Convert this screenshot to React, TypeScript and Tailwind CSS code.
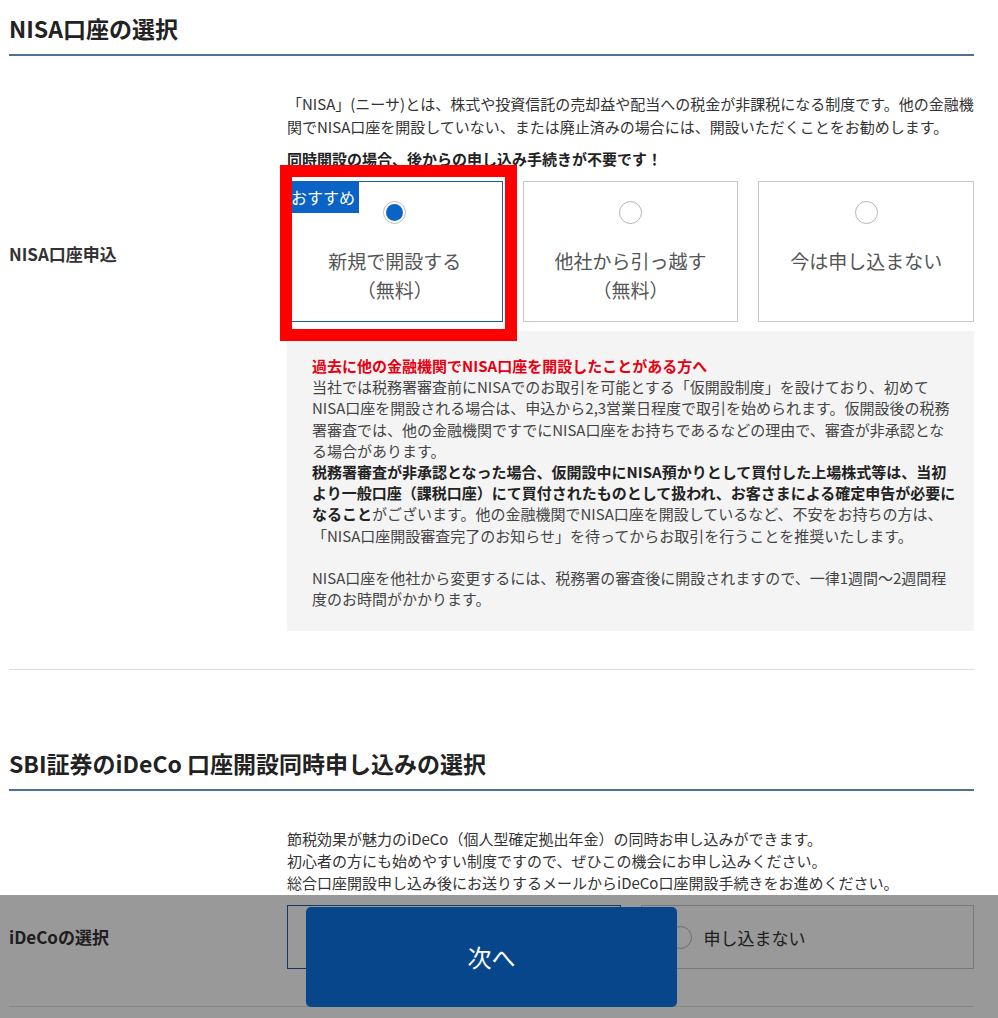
const FONT = "font-['Noto_Sans_CJK_JP','Noto_Sans',sans-serif]";

function Radio({ checked = false }: { checked?: boolean }) {
  if (checked) {
    return (
      <span className="flex h-[23px] w-[23px] shrink-0 items-center justify-center rounded-full border border-[#bdbdbd] bg-white">
        <span className="h-[17px] w-[17px] rounded-full bg-[#0b63c6]" />
      </span>
    );
  }
  return (
    <span className="block h-[23px] w-[23px] shrink-0 rounded-full border border-[#b5b5b5] bg-white" />
  );
}

type NisaOption = {
  label: string;
  note?: string;
  checked?: boolean;
  recommended?: boolean;
};

const NISA_OPTIONS: NisaOption[] = [
  { label: "新規で開設する", note: "（無料）", checked: true, recommended: true },
  { label: "他社から引っ越す", note: "（無料）" },
  { label: "今は申し込まない" },
];

function NisaCard({ option }: { option: NisaOption }) {
  return (
    <div
      className={`relative flex h-[141px] flex-col items-center bg-white pt-[19px] ${
        option.checked ? "border border-[#1a5ea8]" : "border border-[#c8c8c8]"
      }`}
    >
      {option.recommended && (
        <span className="absolute -left-px -top-px h-[32px] bg-[#0b63c6] px-[4px] text-[16px] leading-[32px] text-white">
          おすすめ
        </span>
      )}
      <Radio checked={option.checked} />
      <p className="mt-[22px] text-center text-[19px] leading-[29px] text-[#555]">
        {option.label}
        {option.note && (
          <>
            <br />
            {option.note}
          </>
        )}
      </p>
    </div>
  );
}

function SectionTitle({ children }: { children: React.ReactNode }) {
  return (
    <h2 className="border-b-2 border-[#4f6f94] pb-[10px] text-[23px] font-bold leading-[32px] text-[#222]">
      {children}
    </h2>
  );
}

export default function App() {
  return (
    <div className={`${FONT} min-h-screen bg-white pb-[40px] pl-[9px] pr-[24px] text-[#333]`}>
      {/* NISA */}
      <section className="pt-[12px]">
        <SectionTitle>NISA口座の選択</SectionTitle>

        <div className="grid grid-cols-[278px_1fr] border-b border-[#dedede] pb-[38px] pt-[36px]">
          <div>
            <p className="mt-[151px] text-[17px] font-bold leading-[22px] text-[#333]">NISA口座申込</p>
          </div>

          <div>
            <p className="whitespace-nowrap text-[15px] leading-[23px] text-[#333]">
              「NISA」(ニーサ)とは、株式や投資信託の売却益や配当への税金が非課税になる制度です。他の金融機
              <br />
              関でNISA口座を開設していない、または廃止済みの場合には、開設いただくことをお勧めします。
            </p>
            <p className="mt-[9px] text-[15px] font-bold leading-[23px] text-[#222]">
              同時開設の場合、後からの申し込み手続きが不要です！
            </p>

            <div className="relative mt-[11px] grid grid-cols-3 gap-[20px]">
              {NISA_OPTIONS.map((option) => (
                <NisaCard key={option.label} option={option} />
              ))}
              <div className="pointer-events-none absolute left-[-7px] top-[-16px] z-10 h-[176px] w-[237px] border-[12px] border-[#ff0000]" />
            </div>

            <div className="mt-[9px] whitespace-nowrap bg-[#f4f4f4] pb-[22px] pl-[25px] pt-[24px] text-[15px] leading-[21.2px] text-[#444]">
              <p className="font-bold text-[#e60012]">過去に他の金融機関でNISA口座を開設したことがある方へ</p>
              <p>当社では税務署審査前にNISAでのお取引を可能とする「仮開設制度」を設けており、初めて</p>
              <p>NISA口座を開設される場合は、申込から2,3営業日程度で取引を始められます。仮開設後の税務</p>
              <p>署審査では、他の金融機関ですでにNISA口座をお持ちであるなどの理由で、審査が非承認とな</p>
              <p>る場合があります。</p>
              <p className="font-bold text-[#222]">
                税務署審査が非承認となった場合、仮開設中にNISA預かりとして買付した上場株式等は、当初
              </p>
              <p className="font-bold text-[#222]">
                より一般口座（課税口座）にて買付されたものとして扱われ、お客さまによる確定申告が必要に
              </p>
              <p>
                <span className="font-bold text-[#222]">なること</span>
                がございます。他の金融機関でNISA口座を開設しているなど、不安をお持ちの方は、
              </p>
              <p>「NISA口座開設審査完了のお知らせ」を待ってからお取引を行うことを推奨いたします。</p>
              <p className="h-[21.2px]" />
              <p>NISA口座を他社から変更するには、税務署の審査後に開設されますので、一律1週間〜2週間程</p>
              <p>度のお時間がかかります。</p>
            </div>
          </div>
        </div>
      </section>

      {/* iDeCo */}
      <section className="mt-[77px]">
        <SectionTitle>SBI証券のiDeCo 口座開設同時申し込みの選択</SectionTitle>

        <div className="grid grid-cols-[278px_1fr] border-b border-[#dedede] pb-[37px] pt-[37px]">
          <div>
            <p className="mt-[98px] text-[17px] font-bold leading-[22px] text-[#333]">iDeCoの選択</p>
          </div>

          <div>
            <p className="whitespace-nowrap text-[15px] leading-[22px] text-[#333]">
              節税効果が魅力のiDeCo（個人型確定拠出年金）の同時お申し込みができます。
              <br />
              初心者の方にも始めやすい制度ですので、ぜひこの機会にお申し込みください。
              <br />
              総合口座開設申し込み後にお送りするメールからiDeCo口座開設手続きをお進めください。
            </p>

            <div className="mt-[11px] grid grid-cols-2 gap-[20px]">
              <div className="flex h-[64px] items-center gap-[12px] border border-[#1a5ea8] bg-white pl-[27px]">
                <Radio checked />
                <span className="text-[17px] text-[#333]">申し込む</span>
              </div>
              <div className="flex h-[64px] items-center gap-[12px] border border-[#c8c8c8] bg-white pl-[27px]">
                <Radio />
                <span className="text-[17px] text-[#333]">申し込まない</span>
              </div>
            </div>
          </div>
        </div>
      </section>

      {/* fixed footer */}
      <div className="fixed inset-x-0 bottom-0 z-20 h-[123px] bg-black/40 pl-[306px] pt-[12px]">
        <button
          type="button"
          className="flex h-[100px] w-[371px] items-center justify-center rounded-[5px] bg-[#08468b] text-[24px] text-white"
        >
          次へ
        </button>
      </div>
    </div>
  );
}
